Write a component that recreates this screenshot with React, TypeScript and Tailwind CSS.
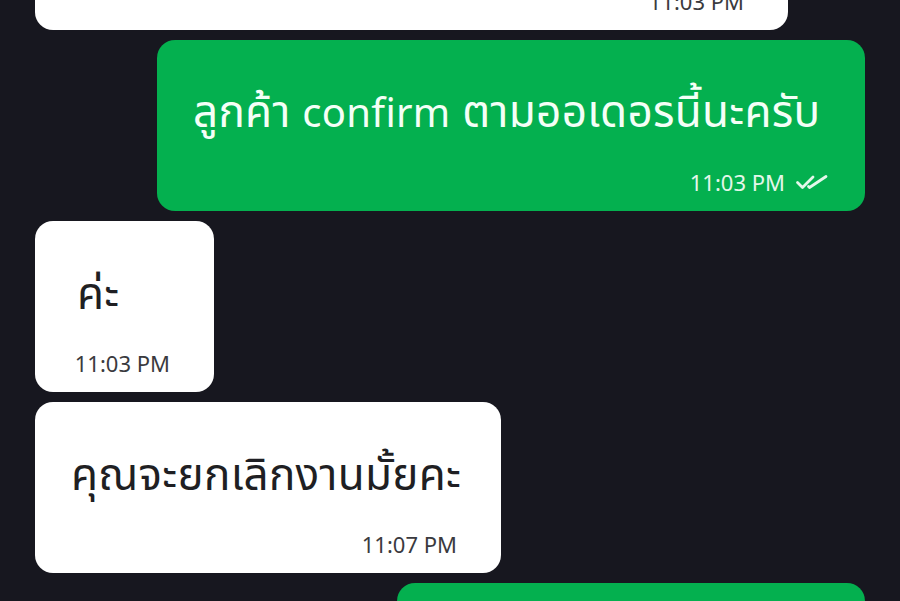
import React from "react";

/* ── Messages ── */
type Msg = {
    side: "in" | "out";
    text: React.ReactNode;
    time: string;
    read?: boolean;
    width?: string;
    first?: boolean;
    indent?: boolean;
};

const messages: Msg[] = [
    { side: "in", text: "โอเคค่ะ", time: "11:03 PM", width: "w-[753px]", first: true },
    {
        side: "out",
        text: (
            <>
                ลูกค้า <span className="text-[40px]">confirm</span> ตามออเดอรนี้นะครับ
            </>
        ),
        time: "11:03 PM",
        read: true,
        width: "w-[708px]",
    },
    { side: "in", text: "ค่ะ", time: "11:03 PM", width: "w-[179px]", indent: true },
    { side: "in", text: "คุณจะยกเลิกงานมั้ยคะ", time: "11:07 PM", width: "w-[466px]" },
    { side: "out", text: "ไม่ครับ", time: "11:08 PM", read: true, width: "w-[468px]" },
];

const ReadTicks: React.FC = () => (
    <svg width="34" height="16" viewBox="0 0 34 16" fill="none" className="ml-[10px]">
        <path d="M2.5 8.5 L7.5 13.5 L18 3" stroke="currentColor" strokeWidth="2.8" strokeLinecap="round" strokeLinejoin="round" />
        <path d="M13.5 12.5 L14.5 13.5 L31 2.5" stroke="currentColor" strokeWidth="2.8" strokeLinecap="round" strokeLinejoin="round" />
    </svg>
);

const Bubble: React.FC<{ msg: Msg }> = ({ msg }) => {
    const out = msg.side === "out";
    return (
        <div className={`flex ${out ? "justify-end pr-[35px]" : "justify-start pl-[35px]"} ${msg.first ? "-mt-[141px] pl-[20px]" : ""}`}>
            <div
                className={`${msg.width} h-[171px] shrink-0 rounded-[18px] pt-[44px] px-[36px] flex flex-col ${out ? "bg-[#04b04f] text-[#f4fff7]" : "bg-white text-[#1f1f23]"
                    }`}
            >
                <div className={`h-[54px] flex items-center text-[44px] leading-[54px] whitespace-nowrap ${msg.indent ? "pl-[6px]" : ""}`}>
                    <span className="tracking-[0.3px]">{msg.text}</span>
                </div>
                <div
                    className={`mt-[30px] h-[28px] flex items-center justify-end text-[22px] ${out ? "text-[#e4f7ea] pr-0" : "text-[#3a3a3e] pr-[8px]"
                        }`}
                >
                    <span>{msg.time}</span>
                    {msg.read && <ReadTicks />}
                </div>
            </div>
        </div>
    );
};

const App: React.FC = () => {
    return (
        <div
            className="w-[900px] h-[601px] overflow-hidden bg-[#17171f] flex flex-col gap-[10px]"
            style={{ fontFamily: '"Noto Sans", "Noto Sans Thai", "Noto Sans Thai Looped", sans-serif' }}
        >
            {messages.map((m, i) => (
                <Bubble key={i} msg={m} />
            ))}
        </div>
    );
};

export default App;
